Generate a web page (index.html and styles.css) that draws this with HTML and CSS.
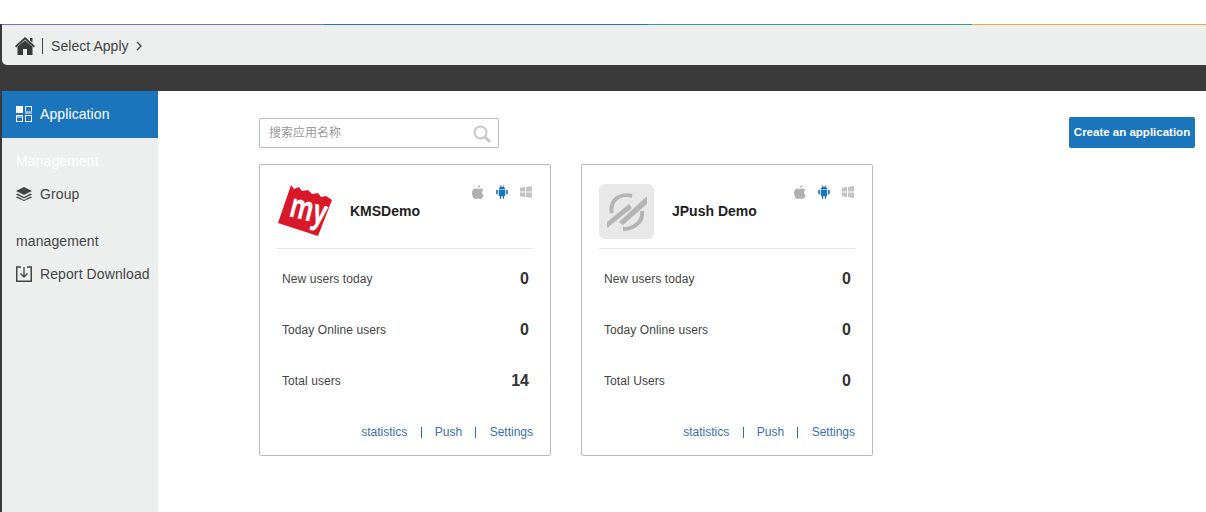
FILE: index.html
```html
<!DOCTYPE html>
<html lang="en">
<head>
    <meta charset="UTF-8">
    <meta name="viewport" content="width=device-width, initial-scale=1.0">
    <title>Select Apply</title>
    <link rel="stylesheet" href="styles.css">
</head>
<body>
<div class="app">
    <div class="stripe">
        <span class="stripe-purple"></span>
        <span class="stripe-blue"></span>
        <span class="stripe-green"></span>
        <span class="stripe-orange"></span>
    </div>

    <div class="topbar">
        <svg class="home-icon" viewBox="0 0 20 18" width="20" height="18">
            <path d="M10 0 L20 9 L18.8 10.4 L10 2.6 L1.2 10.4 L0 9 Z M15 1 H17.5 V5.5 L15 3.4 Z"/>
            <path d="M10 3.2 L17.5 9.8 V18 H12 V12 H8 V18 H2.5 V9.8 Z"/>
        </svg>
        <span class="crumb-sep"></span>
        <span class="crumb">Select Apply</span>
        <svg class="crumb-arrow" viewBox="0 0 6 10" width="6" height="10">
            <path d="M1 1 L5 5 L1 9" fill="none" stroke="#444" stroke-width="1.4"/>
        </svg>
    </div>

    <div class="band"></div>

    <div class="layout">
        <nav class="sidebar">
            <a class="nav-item nav-active">
                <svg class="nav-icon" viewBox="0 0 16 16" width="16" height="16">
                    <rect x="0" y="0" width="7" height="7" fill="#fff"/>
                    <rect x="9.5" y="0.5" width="6" height="6" fill="none" stroke="#fff"/>
                    <rect x="9" y="5" width="7" height="3" fill="#8cb9de"/>
                    <rect x="0" y="9" width="7" height="3" fill="#8cb9de"/>
                    <rect x="0.5" y="9.5" width="6" height="6" fill="none" stroke="#fff"/>
                    <rect x="9.5" y="9.5" width="6" height="6" fill="none" stroke="#fff"/>
                </svg>
                Application
            </a>

            <div class="nav-title nav-title-light">Management</div>
            <a class="nav-item">
                <svg class="nav-icon" viewBox="0 0 16 14" width="16" height="14">
                    <path d="M8 0 L16 4 L8 8 L0 4 Z" fill="#444"/>
                    <path d="M1.5 6.6 L8 9.9 L14.5 6.6 L16 7.4 L8 11.4 L0 7.4 Z" fill="#444"/>
                    <path d="M1.5 9.6 L8 12.9 L14.5 9.6 L16 10.4 L8 14 L0 10.4 Z" fill="#444"/>
                </svg>
                Group
            </a>

            <div class="nav-title nav-title-second">management</div>
            <a class="nav-item">
                <svg class="nav-icon" viewBox="0 0 16 16" width="16" height="16">
                    <path d="M5 1 H0.75 V15.25 H15.25 V1 H11" fill="none" stroke="#444" stroke-width="1.5"/>
                    <path d="M8 1 V11 M4.5 7.5 L8 11 L11.5 7.5" fill="none" stroke="#444" stroke-width="1.3"/>
                </svg>
                Report Download
            </a>
        </nav>

        <main class="content">
            <div class="toolbar">
                <div class="search">
                    <input class="search-input" type="text" placeholder="搜索应用名称">
                    <svg class="search-icon" viewBox="0 0 18 18" width="18" height="18">
                        <circle cx="7.5" cy="7.5" r="6" fill="none" stroke="#c4c8c8" stroke-width="2"/>
                        <path d="M12 12 L17 17" stroke="#c4c8c8" stroke-width="2.6"/>
                    </svg>
                </div>
                <button class="create-btn">Create an application</button>
            </div>

            <div class="cards">
                <div class="card">
                    <div class="card-head">
                        <svg class="app-logo" viewBox="0 0 56 56" width="56" height="56">
                            <polygon fill="#d9182a" points="14,2 17,6 22,4 25,8 31,7 35,11 41,10 44,14 49,13 55,17 41,53 1,40"/>
                            <text class="logo-text" x="11" y="33" textLength="37" lengthAdjust="spacingAndGlyphs" transform="rotate(14 11 33)">my</text>
                        </svg>
                        <div class="app-name">KMSDemo</div>
                        <div class="platforms">
                            <svg viewBox="0 0 12 14" width="12" height="14"><path fill="#b0b0b0" d="M8.4 0 C8.5 1.6 7.3 3 5.9 3 C5.8 1.6 7 .2 8.4 0 Z M11.7 10 C11 12 9.7 14 8.4 14 C7.4 14 7 13.4 5.9 13.4 C4.8 13.4 4.4 14 3.5 14 C1.9 14 0 10.8 0 7.9 C0 5 1.8 3.6 3.4 3.6 C4.4 3.6 5.2 4.2 5.9 4.2 C6.6 4.2 7.5 3.5 8.7 3.5 C9.8 3.5 10.9 4.1 11.5 5 C9.3 6.2 9.7 9.3 11.7 10 Z"/></svg>
                            <svg viewBox="0 0 12 14" width="12" height="14"><path fill="#1a75bc" d="M2.8 4.4 C2.9 2.9 4.2 1.6 6 1.6 C7.8 1.6 9.1 2.9 9.2 4.4 Z M2.8 5 H9.2 V10.6 C9.2 11 8.9 11.2 8.6 11.2 H8 V13.2 C8 14.2 6.8 14.2 6.8 13.2 V11.2 H5.2 V13.2 C5.2 14.2 4 14.2 4 13.2 V11.2 H3.4 C3.1 11.2 2.8 11 2.8 10.6 Z M.2 5.6 C.2 4.6 1.9 4.6 1.9 5.6 V8.8 C1.9 9.8 .2 9.8 .2 8.8 Z M10.1 5.6 C10.1 4.6 11.8 4.6 11.8 5.6 V8.8 C11.8 9.8 10.1 9.8 10.1 8.8 Z"/><path stroke="#1a75bc" stroke-width=".7" d="M4 .2 L4.8 2 M8 .2 L7.2 2"/></svg>
                            <svg viewBox="0 0 12 12" width="12" height="12"><path fill="#c4c4c4" d="M0 1.8 L5 1 V5.6 H0 Z M5.8 .9 L12 0 V5.6 H5.8 Z M0 6.4 H5 V11 L0 10.2 Z M5.8 6.4 H12 V12 L5.8 11.1 Z"/></svg>
                        </div>
                    </div>
                    <div class="rows">
                        <div class="row"><span>New users today</span><b>0</b></div>
                        <div class="row"><span>Today Online users</span><b>0</b></div>
                        <div class="row"><span>Total users</span><b>14</b></div>
                    </div>
                    <div class="card-links">
                        <a>statistics</a><i></i><a>Push</a><i></i><a>Settings</a>
                    </div>
                </div>

                <div class="card">
                    <div class="card-head">
                        <svg class="app-logo" viewBox="0 0 56 55" width="56" height="55">
                            <rect width="55" height="55" rx="6" fill="#e8e8e8"/>
                            <g fill="none" stroke="#b4b4b4" stroke-width="4">
                                <path d="M33 12 C26 10 19 12 15 17 C12 21 12 25 13 29"/>
                                <path d="M43 27 C44 33 41 38 37 41 C33 44 28 45 24 45"/>
                            </g>
                            <g fill="#b4b4b4">
                                <polygon points="8,44 8,38 30,20 33,24"/>
                                <polygon points="20,38 48,12 48,20 24,41"/>
                            </g>
                        </svg>
                        <div class="app-name">JPush Demo</div>
                        <div class="platforms">
                            <svg viewBox="0 0 12 14" width="12" height="14"><path fill="#b0b0b0" d="M8.4 0 C8.5 1.6 7.3 3 5.9 3 C5.8 1.6 7 .2 8.4 0 Z M11.7 10 C11 12 9.7 14 8.4 14 C7.4 14 7 13.4 5.9 13.4 C4.8 13.4 4.4 14 3.5 14 C1.9 14 0 10.8 0 7.9 C0 5 1.8 3.6 3.4 3.6 C4.4 3.6 5.2 4.2 5.9 4.2 C6.6 4.2 7.5 3.5 8.7 3.5 C9.8 3.5 10.9 4.1 11.5 5 C9.3 6.2 9.7 9.3 11.7 10 Z"/></svg>
                            <svg viewBox="0 0 12 14" width="12" height="14"><path fill="#1a75bc" d="M2.8 4.4 C2.9 2.9 4.2 1.6 6 1.6 C7.8 1.6 9.1 2.9 9.2 4.4 Z M2.8 5 H9.2 V10.6 C9.2 11 8.9 11.2 8.6 11.2 H8 V13.2 C8 14.2 6.8 14.2 6.8 13.2 V11.2 H5.2 V13.2 C5.2 14.2 4 14.2 4 13.2 V11.2 H3.4 C3.1 11.2 2.8 11 2.8 10.6 Z M.2 5.6 C.2 4.6 1.9 4.6 1.9 5.6 V8.8 C1.9 9.8 .2 9.8 .2 8.8 Z M10.1 5.6 C10.1 4.6 11.8 4.6 11.8 5.6 V8.8 C11.8 9.8 10.1 9.8 10.1 8.8 Z"/><path stroke="#1a75bc" stroke-width=".7" d="M4 .2 L4.8 2 M8 .2 L7.2 2"/></svg>
                            <svg viewBox="0 0 12 12" width="12" height="12"><path fill="#c4c4c4" d="M0 1.8 L5 1 V5.6 H0 Z M5.8 .9 L12 0 V5.6 H5.8 Z M0 6.4 H5 V11 L0 10.2 Z M5.8 6.4 H12 V12 L5.8 11.1 Z"/></svg>
                        </div>
                    </div>
                    <div class="rows">
                        <div class="row"><span>New users today</span><b>0</b></div>
                        <div class="row"><span>Today Online users</span><b>0</b></div>
                        <div class="row"><span>Total Users</span><b>0</b></div>
                    </div>
                    <div class="card-links">
                        <a>statistics</a><i></i><a>Push</a><i></i><a>Settings</a>
                    </div>
                </div>
            </div>
        </main>
    </div>
</div>
</body>
</html>
```

FILE: styles.css
```css
html, body {
    height: 100%;
}
body {
    margin: 0;
    overflow: hidden;
    background-color: #fff;
    font-family: "Liberation Sans", Arial, sans-serif;
    font-size: 14px;
    color: #444;
}
.app {
    display: flex;
    flex-direction: column;
    height: 488px;
    margin-top: 24px;
    padding-left: 2px;
    background-color: #3a3a3a;
}

/* top colour line */
.stripe {
    display: flex;
    flex: none;
    height: 1px;
}
.stripe span {
    display: block;
}
.stripe-purple {
    width: 322px;
    background-color: #7b68c8;
}
.stripe-blue {
    width: 324px;
    background-color: #2a6fb0;
}
.stripe-green {
    width: 324px;
    background-color: #2b9d8a;
}
.stripe-orange {
    flex: 1;
    background-color: #f5a93a;
}

.topbar {
    display: flex;
    flex: none;
    align-items: center;
    box-sizing: border-box;
    height: 40px;
    padding: 2px 0 0 13px;
    background-color: #edefef;
    border-bottom-left-radius: 5px;
}
.home-icon {
    fill: #3a3a3a;
}
.crumb-sep {
    width: 1px;
    height: 16px;
    margin: 0 8px 0 7px;
    background-color: #444;
}
.crumb {
    letter-spacing: .05px;
}
.crumb-arrow {
    margin-left: 7px;
}
.band {
    flex: none;
    height: 26px;
}

.layout {
    display: flex;
    flex: 1;
    min-height: 0;
}
.sidebar {
    flex: none;
    width: 156px;
    background-color: #edefef;
    letter-spacing: .1px;
}
.nav-item {
    display: flex;
    align-items: center;
    gap: 8px;
    height: 32px;
    padding-left: 14px;
}
.nav-active {
    box-sizing: border-box;
    height: 47px;
    padding-bottom: 2px;
    background-color: #1a75bc;
    color: #fff;
}
.nav-icon {
    flex: none;
}
.nav-title {
    height: 34px;
    padding-left: 14px;
    line-height: 34px;
}
.nav-title-light {
    margin-top: 6px;
    color: #fff;
}
.nav-title-second {
    margin-top: 14px;
}

.content {
    flex: 1;
    min-width: 0;
    padding: 26px 11px 0 101px;
    background-color: #fff;
}
.toolbar {
    display: flex;
    justify-content: space-between;
    align-items: flex-start;
    margin-bottom: 16px;
}
.search {
    position: relative;
    width: 240px;
    height: 30px;
    margin-top: 1px;
}
.search-input {
    box-sizing: border-box;
    width: 100%;
    height: 100%;
    padding: 0 30px 0 9px;
    border: 1px solid #bbb;
    border-radius: 2px;
    outline: none;
    font-family: "Liberation Sans", "Noto Sans CJK SC", sans-serif;
    font-size: 12px;
}
.search-input::placeholder {
    color: #999;
}
.search-icon {
    position: absolute;
    top: 7px;
    right: 8px;
}
.create-btn {
    width: 126px;
    height: 31px;
    padding: 0 0 2px;
    border: none;
    border-radius: 2px;
    background-color: #1a75bc;
    color: #fff;
    font-family: "Liberation Sans", Arial, sans-serif;
    font-size: 11.5px;
    font-weight: bold;
}

.cards {
    display: flex;
    gap: 30px;
}
.card {
    box-sizing: border-box;
    width: 292px;
    height: 292px;
    padding: 0 17px;
    border: 1px solid #bbb;
    border-radius: 2px;
}
.card-head {
    display: flex;
    align-items: center;
    position: relative;
    box-sizing: border-box;
    height: 84px;
    padding-top: 9px;
    border-bottom: 1px solid #e6e6e6;
}
.app-logo {
    flex: none;
    overflow: visible;
}
.logo-text {
    fill: #fff;
    font-family: "Open Sans", sans-serif;
    font-size: 34px;
    font-weight: 700;
}
.app-name {
    margin-left: 17px;
    font-size: 14px;
    font-weight: bold;
    color: #222;
}
.platforms {
    display: flex;
    gap: 12px;
    align-items: center;
    position: absolute;
    top: 20px;
    right: 1px;
}
.rows {
    margin-top: 4px;
}
.row {
    display: flex;
    justify-content: space-between;
    align-items: center;
    height: 51px;
    padding: 0 4px 0 5px;
    font-size: 12px;
}
.row span {
    letter-spacing: .08px;
}
.row b {
    font-size: 16px;
    color: #333;
}
.card-links {
    display: flex;
    justify-content: flex-end;
    align-items: center;
    height: 20px;
    margin-top: 16px;
    font-size: 12px;
    color: #3a6fb5;
}
.card-links i {
    width: 1px;
    height: 11px;
    margin: 0 13.25px;
    background-color: #1a75bc;
}
```
